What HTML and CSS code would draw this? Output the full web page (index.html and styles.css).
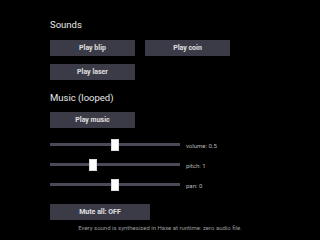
FILE: index.html
```html
<!DOCTYPE html>
<html lang="en">
<head>
  <meta charset="UTF-8" />
  <meta name="viewport" content="width=device-width, initial-scale=1.0"/>
  <title>Sound demo</title>
  <link rel="stylesheet" href="styles.css">
</head>
<body>
  <main class="panel">
    <h2 class="section-title">Sounds</h2>
    <div class="btn-row">
      <button class="btn">Play blip</button>
      <button class="btn">Play coin</button>
    </div>
    <div class="btn-row">
      <button class="btn">Play laser</button>
    </div>

    <h2 class="section-title music-title">Music (looped)</h2>
    <div class="btn-row">
      <button class="btn">Play music</button>
    </div>

    <div class="sliders">
      <div class="slider-row">
        <div class="slider"><div class="track"></div><div class="thumb" style="left: 50%;"></div></div>
        <span class="slider-label">volume: 0.5</span>
      </div>
      <div class="slider-row">
        <div class="slider"><div class="track"></div><div class="thumb" style="left: 33.3%;"></div></div>
        <span class="slider-label">pitch: 1</span>
      </div>
      <div class="slider-row">
        <div class="slider"><div class="track"></div><div class="thumb" style="left: 50%;"></div></div>
        <span class="slider-label">pan: 0</span>
      </div>
    </div>

    <div class="btn-row mute-row">
      <button class="btn btn-wide">Mute all: OFF</button>
    </div>
  </main>

  <p class="footer">Every sound is synthesized in Haxe at runtime: zero audio file.</p>
</body>
</html>
```

FILE: styles.css
```css
body {
  margin: 0;
  background: #000000;
  font-family: Roboto, 'Liberation Sans', sans-serif;
  color: #e6e6e6;
  width: 320px;
  height: 240px;
  overflow: hidden;
}

.panel {
  padding: 18px 0 0 50px;
}

.section-title {
  margin: 0 0 9px;
  font-size: 9.5px;
  line-height: 13px;
  font-weight: normal;
  color: #e8e8e8;
}

.music-title {
  margin-top: 11px;
  margin-bottom: 8px;
}

.btn-row {
  display: flex;
  gap: 10px;
  margin-bottom: 8px;
}

.btn {
  width: 85px;
  height: 16px;
  padding: 0;
  border: none;
  background: #3b3b48;
  color: #e0e0e0;
  font-family: Roboto, 'Liberation Sans', sans-serif;
  font-size: 7px;
  font-weight: bold;
}

.btn-wide {
  width: 100px;
}

.sliders {
  display: flex;
  flex-direction: column;
  gap: 8px;
  margin-top: 11px;
}

.slider-row {
  display: flex;
  align-items: center;
  height: 12px;
}

.slider {
  position: relative;
  flex: none;
  width: 130px;
  height: 12px;
}

.track {
  position: absolute;
  left: 0;
  right: 0;
  top: 4px;
  height: 3px;
  background: #4a4a58;
}

.thumb {
  position: absolute;
  top: 0;
  width: 8px;
  height: 12px;
  margin-left: -4px;
  background: #ffffff;
  box-shadow: inset 0 0 0 1px #dcdcdc;
}

.slider-label {
  margin-left: 6px;
  font-size: 6px;
  color: #b8b8b8;
}

.mute-row {
  margin-top: 13px;
  margin-bottom: 4px;
}

.footer {
  margin: 0;
  text-align: center;
  font-size: 6px;
  line-height: 8px;
  color: #9a9a9a;
}
```
